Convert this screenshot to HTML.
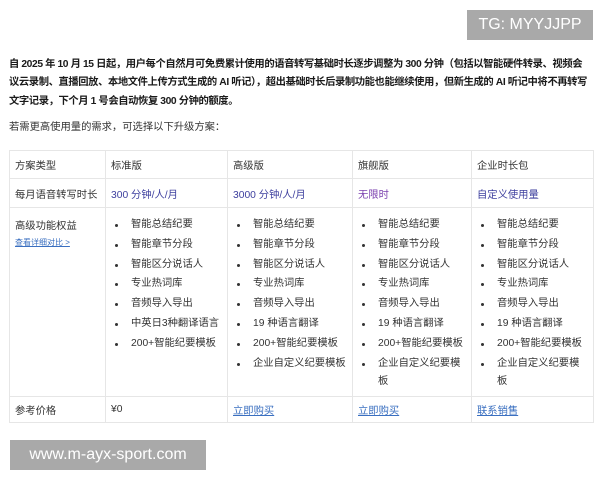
<!DOCTYPE html>
<html><head><meta charset="utf-8"><style>
*{margin:0;padding:0;box-sizing:border-box}
body{width:600px;height:480px;background:#fff;font-family:"Liberation Sans","Noto Sans CJK SC",sans-serif;color:#222;position:relative;overflow:hidden}
.wm1{position:absolute;left:467px;top:10px;width:126px;height:30px;background:#a9a9a9;color:#fff;font-size:16px;line-height:30px;text-align:center}
.wm2{position:absolute;left:10px;top:440px;width:196px;height:30px;background:#a9a9a9;color:#fff;font-size:16px;line-height:30px;text-align:center}
.p1{position:absolute;left:9px;top:56px;width:700px;font-size:10.3px;font-weight:bold;line-height:18.3px;color:#1a1a1a;letter-spacing:-0.4px;white-space:nowrap}
.p2{position:absolute;left:9px;top:118px;font-size:10.3px;color:#333}
table{position:absolute;left:9px;top:150px;border-collapse:collapse;font-size:10.3px;color:#333}
td{border:1px solid #e6e6e6;padding:0 5px;vertical-align:middle}
.c1{width:96px}.c2{width:122px}.c3{width:125px}.c4{width:119px}.c5{width:122px}
.blue{color:#3d3f9e}.pur{color:#7a3fae}
a{color:#3a6fc0;text-decoration:underline}
ul{list-style:none}
li{position:relative;padding-left:20px;line-height:19.8px}
li:before{content:"";position:absolute;left:4px;top:9px;width:3px;height:3px;border-radius:50%;background:#333}
.top{vertical-align:top}
</style></head><body>
<div class="wm1">TG: MYYJJPP</div>
<div class="p1">自 2025 年 10 月 15 日起，用户每个自然月可免费累计使用的语音转写基础时长逐步调整为 300 分钟（包括以智能硬件转录、视频会<br>议云录制、直播回放、本地文件上传方式生成的 AI 听记），超出基础时长后录制功能也能继续使用，但新生成的 AI 听记中将不再转写<br>文字记录，下个月 1 号会自动恢复 300 分钟的额度。</div>
<div class="p2">若需更高使用量的需求，可选择以下升级方案：</div>
<table>
<tr style="height:28px"><td class="c1">方案类型</td><td class="c2">标准版</td><td class="c3">高级版</td><td class="c4">旗舰版</td><td class="c5">企业时长包</td></tr>
<tr style="height:29px"><td>每月语音转写时长</td><td class="blue">300 分钟/人/月</td><td class="blue">3000 分钟/人/月</td><td class="pur">无限时</td><td class="blue">自定义使用量</td></tr>
<tr style="height:189px"><td class="top" style="padding-top:9px">高级功能权益<br><a style="font-size:8px;line-height:22px">查看详细对比 &gt;</a></td>
<td class="top" style="padding-top:7px"><ul><li>智能总结纪要</li><li>智能章节分段</li><li>智能区分说话人</li><li>专业热词库</li><li>音频导入导出</li><li>中英日3种翻译语言</li><li>200+智能纪要模板</li></ul></td>
<td class="top" style="padding-top:7px"><ul><li>智能总结纪要</li><li>智能章节分段</li><li>智能区分说话人</li><li>专业热词库</li><li>音频导入导出</li><li>19 种语言翻译</li><li>200+智能纪要模板</li><li>企业自定义纪要模板</li></ul></td>
<td class="top" style="padding-top:7px"><ul><li>智能总结纪要</li><li>智能章节分段</li><li>智能区分说话人</li><li>专业热词库</li><li>音频导入导出</li><li>19 种语言翻译</li><li>200+智能纪要模板</li><li style="line-height:18px;padding-top:1px">企业自定义纪要模板</li></ul></td>
<td class="top" style="padding-top:7px"><ul><li>智能总结纪要</li><li>智能章节分段</li><li>智能区分说话人</li><li>专业热词库</li><li>音频导入导出</li><li>19 种语言翻译</li><li>200+智能纪要模板</li><li style="line-height:18px;padding-top:1px">企业自定义纪要模板</li></ul></td></tr>
<tr style="height:26px"><td>参考价格</td><td>¥0</td><td><a>立即购买</a></td><td><a>立即购买</a></td><td><a>联系销售</a></td></tr>
</table>
<div class="wm2">www.m-ayx-sport.com</div>
</body></html>
